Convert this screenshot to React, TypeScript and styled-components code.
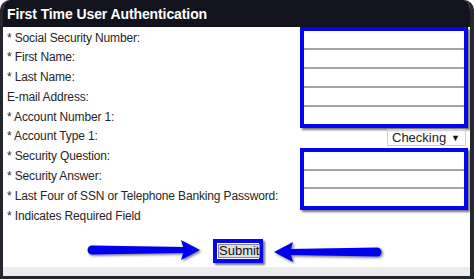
import React from 'react';
import styled, { createGlobalStyle } from 'styled-components';

const GlobalStyle = createGlobalStyle`
  html, body {
    margin: 0;
    padding: 0;
    background: #ffffff;
  }
  body {
    font-family: 'Liberation Sans', Arial, sans-serif;
  }
`;

const BLUE = '#0505ee';
const ROW = 19.8;

const Frame = styled.div`
  width: 474px;
  height: 279px;
  box-sizing: border-box;
  display: flex;
  flex-direction: column;
  background: #ffffff;
  border-left: 3px solid #26262e;
  border-right: 4px solid #26262e;
  border-bottom: 3px solid #26262e;
  border-radius: 10px 10px 0 0;
  overflow: hidden;
`;

const Header = styled.div`
  height: 27px;
  flex: none;
  display: flex;
  align-items: center;
  padding-left: 4px;
  background: #13131e;
  color: #ffffff;
  font-size: 14px;
  font-weight: bold;
  letter-spacing: -0.1px;
`;

const Body = styled.div`
  flex: 1;
  display: flex;
  flex-direction: column;
`;

const FormGrid = styled.div`
  display: grid;
  grid-template-columns: 1fr 168px;
  padding: 0 2px 0 4px;
`;

const LabelList = styled.div`
  display: flex;
  flex-direction: column;
  padding-top: 1.5px;
`;

const Label = styled.div`
  height: ${ROW}px;
  line-height: ${ROW}px;
  font-size: 12px;
  letter-spacing: -0.15px;
  color: #262626;
  white-space: nowrap;
`;

const FieldColumn = styled.div`
  display: flex;
  flex-direction: column;
  align-items: stretch;
`;

const HighlightBox = styled.div<{ $height: number; $gap?: number }>`
  height: ${({ $height }) => $height}px;
  margin-top: ${({ $gap = 0 }) => $gap}px;
  box-sizing: border-box;
  border: 4px solid ${BLUE};
  box-shadow: 2px 2px 2px rgba(0, 0, 0, 0.55);
  display: flex;
  flex-direction: column;
  gap: 2px;
  background: #a4a4a4;
`;

const TextInput = styled.input`
  flex: 1;
  min-height: 0;
  border: none;
  margin: 0;
  padding: 0;
  background: #ffffff;
  outline: none;
`;

const SelectBox = styled.div`
  align-self: flex-end;
  width: 79px;
  height: 17px;
  margin: 1px 2px 0 0;
  box-sizing: border-box;
  border: 1px solid #cfcfcf;
  display: flex;
  align-items: center;
  justify-content: space-between;
  padding: 0 5px 0 4px;
  font-size: 13px;
  color: #222222;
`;

const Caret = styled.span`
  font-size: 9px;
  color: #111111;
`;

const SubmitRow = styled.div`
  display: flex;
  align-items: center;
  padding: 13px 0 0 84px;
`;

const SubmitFrame = styled.div`
  margin: 0 11px 0 13px;
  width: 50px;
  height: 24px;
  box-sizing: border-box;
  border: 4px solid ${BLUE};
  box-shadow: 2px 2px 2px rgba(0, 0, 0, 0.55);
  display: flex;
  padding: 1px;
  background: #ffffff;
`;

const SubmitButton = styled.button`
  flex: 1;
  margin: 0;
  padding: 0;
  border: 1px solid #8a8a8a;
  background: #dedede;
  font-family: 'Liberation Sans', Arial, sans-serif;
  font-size: 13px;
  line-height: 12px;
  color: #111111;
`;

const Band = styled.div`
  margin-top: auto;
  height: 9px;
  background: #ececec;
`;

const ArrowSvg = styled.svg<{ $offset: number }>`
  display: block;
  overflow: visible;
  margin-top: ${({ $offset }) => $offset}px;
`;

interface ArrowProps {
  length: number;
  direction: 'left' | 'right';
  offset?: number;
}

const Arrow: React.FC<ArrowProps> = ({ length, direction, offset = 0 }) => {
  const x = (v: number) => (direction === 'right' ? v : length - v);
  const neck = length - 18;
  const shaft = `M${x(5)},5.5 L${x(neck + 2)},7 L${x(neck + 2)},13 L${x(5)},14.5 A4.5,4.5 0 0 ${
    direction === 'right' ? 1 : 0
  } ${x(5)},5.5 Z`;
  const head = `M${x(neck - 1)},0 L${x(length)},10 L${x(neck - 1)},20 L${x(neck + 2)},10 Z`;
  const id = `shadow-${direction}`;

  return (
    <ArrowSvg width={length} height={20} viewBox={`0 0 ${length} 20`} $offset={offset}>
      <defs>
        <filter id={id} x="-10%" y="-40%" width="120%" height="180%">
          <feDropShadow dx="1.5" dy="1.5" stdDeviation="1" floodColor="#000" floodOpacity="0.5" />
        </filter>
      </defs>
      <g fill={BLUE} filter={`url(#${id})`}>
        <path d={shaft} />
        <path d={head} />
      </g>
    </ArrowSvg>
  );
};

const labels = [
  '* Social Security Number:',
  '* First Name:',
  '* Last Name:',
  'E-mail Address:',
  '* Account Number 1:',
  '* Account Type 1:',
  '* Security Question:',
  '* Security Answer:',
  '* Last Four of SSN or Telephone Banking Password:',
  '* Indicates Required Field',
];

export default function App() {
  return (
    <>
      <GlobalStyle />
      <Frame>
        <Header>First Time User Authentication</Header>
        <Body>
          <FormGrid>
            <LabelList>
              {labels.map((text) => (
                <Label key={text}>{text}</Label>
              ))}
            </LabelList>
            <FieldColumn>
              <HighlightBox $height={101}>
                {[0, 1, 2, 3, 4].map((i) => (
                  <TextInput key={i} type="text" />
                ))}
              </HighlightBox>
              <SelectBox>
                <span>Checking</span>
                <Caret>▼</Caret>
              </SelectBox>
              <HighlightBox $height={62} $gap={2}>
                {[0, 1, 2].map((i) => (
                  <TextInput key={i} type="text" />
                ))}
              </HighlightBox>
            </FieldColumn>
          </FormGrid>
          <SubmitRow>
            <Arrow length={113} direction="right" offset={-2} />
            <SubmitFrame>
              <SubmitButton type="button">Submit</SubmitButton>
            </SubmitFrame>
            <Arrow length={108} direction="left" offset={2} />
          </SubmitRow>
          <Band />
        </Body>
      </Frame>
    </>
  );
}
